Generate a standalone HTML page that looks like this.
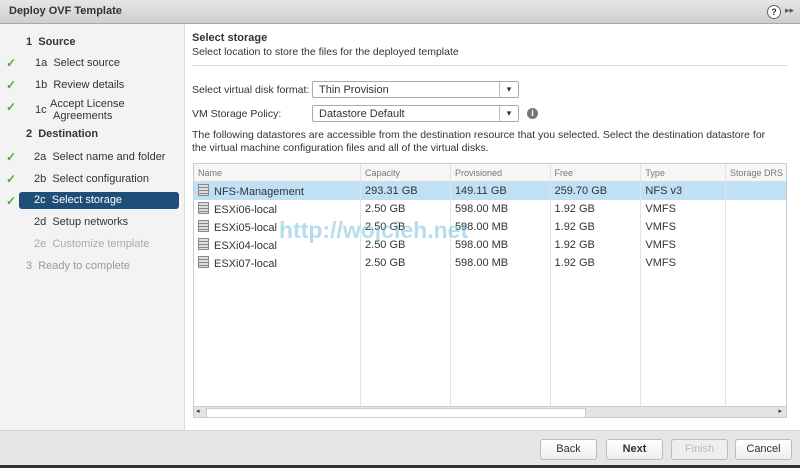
<!DOCTYPE html><html><head><style>
body{margin:0;width:800px;height:468px;overflow:hidden;font-family:"Liberation Sans",sans-serif;font-size:11px;color:#333;background:#fff;position:relative}
.a{position:absolute}
.title{left:0;top:0;width:800px;height:24px;background:linear-gradient(#e6e6e6,#cfcfcf);border-bottom:1px solid #aaa;box-sizing:border-box}
.nav{left:0;top:24px;width:184px;height:406px;background:#f3f3f3;border-right:1px solid #ddd}
.ni{position:absolute;font-size:11px;white-space:nowrap}
.chk{position:absolute;left:6px;color:#4caf3a;font-weight:bold;font-size:12px}
.sel{background:#1f4e79;color:#fff;border-radius:3px}
.dd{position:absolute;height:17px;border:1px solid #aaa;border-radius:2px;background:#fff;box-sizing:border-box;padding:2px 6px;font-size:11px}
.dd:after{content:"▾";position:absolute;right:0;top:0;width:18px;height:15px;border-left:1px solid #bbb;text-align:center;font-size:9px;line-height:15px}
table{border-collapse:collapse;font-size:11px}
td{height:18px;padding:0 4px;border-right:1px solid #e3e3e3;white-space:nowrap}
.h td{height:17px;font-size:9px;color:#777;background:#f6f6f6;border-bottom:1px solid #ddd}
.ic{display:inline-block;width:9px;height:10px;border:1px solid #888;background:repeating-linear-gradient(#ddd 0 2px,#888 2px 3px);vertical-align:-1px;margin-right:5px}
.btn{position:absolute;top:439px;height:21px;width:57px;border:1px solid #bbb;border-radius:3px;background:linear-gradient(#fff,#eee);box-sizing:border-box;text-align:center;line-height:19px;font-size:11px}
</style></head><body>
<div class="a title"><span class="a" style="left:9px;top:5px;font-size:11px;font-weight:bold;color:#333">Deploy OVF Template</span>
<span class="a" style="left:767px;top:5px;width:12px;height:12px;border-radius:50%;border:1px solid #666;background:#fff;font-size:9px;text-align:center;line-height:12px;font-weight:bold">?</span>
<span class="a" style="left:785px;top:5px;font-size:9px;color:#555">▸▸</span></div>
<div class="a nav">
<div class="ni" style="left:26px;top:12px;font-weight:bold">1&nbsp; Source</div>
<span class="chk" style="top:32px">✓</span><div class="ni" style="left:35px;top:33px">1a&nbsp; Select source</div>
<span class="chk" style="top:54px">✓</span><div class="ni" style="left:35px;top:55px">1b&nbsp; Review details</div>
<span class="chk" style="top:76px">✓</span><div class="ni" style="left:35px;top:80px">1c</div><div class="ni" style="left:50px;top:74px;line-height:12px">Accept License<br>&nbsp;Agreements</div>
<div class="ni" style="left:26px;top:104px;font-weight:bold">2&nbsp; Destination</div>
<span class="chk" style="top:126px">✓</span><div class="ni" style="left:34px;top:127px">2a&nbsp; Select name and folder</div>
<span class="chk" style="top:148px">✓</span><div class="ni" style="left:34px;top:149px">2b&nbsp; Select configuration</div>
<span class="chk" style="top:170px">✓</span><div class="ni sel" style="left:19px;top:168px;width:160px;height:17px;line-height:17px;padding-left:15px;box-sizing:border-box">2c&nbsp; Select storage</div>
<div class="ni" style="left:34px;top:192px">2d&nbsp; Setup networks</div>
<div class="ni" style="left:34px;top:214px;color:#aaa">2e&nbsp; Customize template</div>
<div class="ni" style="left:26px;top:236px;color:#999">3&nbsp; Ready to complete</div>
</div>
<div class="a" style="left:192px;top:32px;font-weight:bold">Select storage</div>
<div class="a" style="left:192px;top:46px;font-size:10.5px">Select location to store the files for the deployed template</div>
<div class="a" style="left:192px;top:65px;width:596px;border-top:1px solid #ddd"></div>
<div class="a" style="left:192px;top:84px;font-size:10.5px">Select virtual disk format:</div>
<div class="dd" style="left:312px;top:81px;width:207px">Thin Provision</div>
<div class="a" style="left:192px;top:108px;font-size:10.5px">VM Storage Policy:</div>
<div class="dd" style="left:312px;top:105px;width:207px">Datastore Default</div>
<div class="a" style="left:527px;top:108px;width:11px;height:11px;border-radius:50%;background:#777;color:#fff;font-size:9px;font-weight:bold;text-align:center;line-height:11px">i</div>
<div class="a" style="left:192px;top:129px;width:590px;line-height:13px;font-size:10.5px">The following datastores are accessible from the destination resource that you selected. Select the destination datastore for the virtual machine configuration files and all of the virtual disks.</div>
<div class="a" style="left:193px;top:163px;width:594px;height:255px;border:1px solid #ccc;box-sizing:border-box;overflow:hidden">
<table style="width:594px">
<tr class="h"><td style="width:160px">Name</td><td style="width:82px">Capacity</td><td style="width:92px">Provisioned</td><td style="width:83px">Free</td><td style="width:77px">Type</td><td>Storage DRS</td></tr>
<tr style="background:#bfe0f5"><td><span class="ic"></span>NFS-Management</td><td>293.31 GB</td><td>149.11 GB</td><td>259.70 GB</td><td>NFS v3</td><td></td></tr>
<tr><td><span class="ic"></span>ESXi06-local</td><td>2.50 GB</td><td>598.00 MB</td><td>1.92 GB</td><td>VMFS</td><td></td></tr>
<tr><td><span class="ic"></span>ESXi05-local</td><td>2.50 GB</td><td>598.00 MB</td><td>1.92 GB</td><td>VMFS</td><td></td></tr>
<tr><td><span class="ic"></span>ESXi04-local</td><td>2.50 GB</td><td>598.00 MB</td><td>1.92 GB</td><td>VMFS</td><td></td></tr>
<tr><td><span class="ic"></span>ESXi07-local</td><td>2.50 GB</td><td>598.00 MB</td><td>1.92 GB</td><td>VMFS</td><td></td></tr>
<tr><td style="height:140px"></td><td></td><td></td><td></td><td></td><td></td></tr>
</table>
<div class="a" style="left:0;top:242px;width:592px;height:11px;background:#e4e4e4;border-top:1px solid #ccc"><div class="a" style="left:12px;top:1px;width:378px;height:8px;background:#fff;border:1px solid #ccc"></div><span class="a" style="left:2px;top:0;font-size:7px">◂</span><span class="a" style="right:4px;top:0;font-size:7px">▸</span></div>
</div>
<div class="a" style="left:279px;top:217px;font-size:23px;font-weight:bold;color:rgba(90,180,215,.45)">http://wojcieh.net</div>
<div class="a" style="left:0;top:430px;width:800px;height:35px;background:#e6e6e6;border-top:1px solid #d5d5d5"></div>
<div class="a" style="left:0;top:465px;width:800px;height:3px;background:#333"></div>
<div class="btn" style="left:540px">Back</div>
<div class="btn" style="left:606px;font-weight:bold">Next</div>
<div class="btn" style="left:671px;color:#bbb;background:#eee">Finish</div>
<div class="btn" style="left:735px">Cancel</div>
</body></html>
